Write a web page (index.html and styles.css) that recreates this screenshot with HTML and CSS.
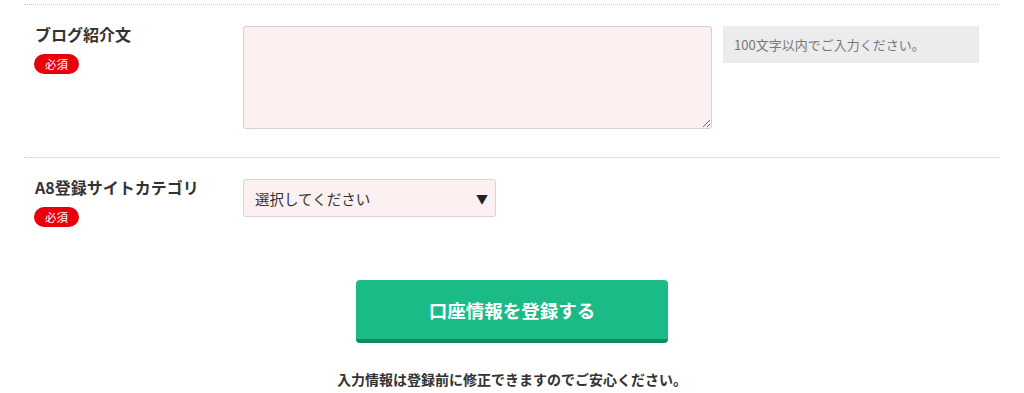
FILE: index.html
```html
<!DOCTYPE html>
<html lang="ja">
<head>
<meta charset="utf-8">
<link rel="stylesheet" href="styles.css">
</head>
<body>
<div class="form">
  <div class="row">
    <div class="label">
      <div class="label-text">ブログ紹介文</div>
      <span class="badge">必須</span>
    </div>
    <div class="field">
      <textarea class="textarea"></textarea>
      <div class="hint">100文字以内でご入力ください。</div>
    </div>
  </div>
  <div class="row row-last">
    <div class="label">
      <div class="label-text">A8登録サイトカテゴリ</div>
      <span class="badge">必須</span>
    </div>
    <div class="field">
      <div class="select">
        <span>選択してください</span>
        <span class="arrow">▼</span>
      </div>
    </div>
  </div>
  <div class="actions">
    <button class="submit">口座情報を登録する</button>
    <p class="note">入力情報は登録前に修正できますのでご安心ください。</p>
  </div>
</div>
</body>
</html>
```

FILE: styles.css
```css
* { box-sizing: border-box; }
html, body { margin: 0; padding: 0; background: #fff; }
body {
  font-family: "Noto Sans CJK JP", "Noto Sans", sans-serif;
  color: #333;
}
.form {
  padding: 4px 24px 0 24px;
  width: 1024px;
}
.row {
  display: flex;
  border-top: 1px dotted #c8c8c8;
  padding: 21px 0 28px 0;
}
.row-last { padding-bottom: 0; height: 70px; }
.label {
  width: 219px;
  padding-left: 11px;
  flex: none;
}
.label-text {
  font-size: 16px;
  font-weight: bold;
  line-height: 16px;
  color: #333;
}
.badge {
  display: inline-block;
  margin-top: 12px;
  margin-left: -1px;
  width: 45px;
  height: 20px;
  line-height: 20px;
  border-radius: 10px;
  background: #e8000b;
  color: #fff;
  font-size: 11.5px;
  text-align: center;
}
.field {
  display: flex;
  gap: 11px;
  align-items: flex-start;
}
.textarea {
  width: 469px;
  height: 103px;
  background: #fdf0f1;
  border: 1px solid #d8cfcf;
  border-radius: 3px;
  margin: 0;
  padding: 6px;
  resize: vertical;
  display: block;
}
.hint {
  width: 256px;
  height: 37px;
  background: #ececec;
  color: #777;
  font-size: 13px;
  line-height: 37px;
  padding-left: 11px;
}
.select {
  width: 253px;
  height: 38px;
  background: #fdf0f1;
  border: 1px solid #dcd4d4;
  border-radius: 3px;
  display: flex;
  align-items: center;
  justify-content: space-between;
  padding: 0 7px 0 11px;
  font-size: 14.5px;
  color: #333;
}
.arrow { font-size: 12px; color: #222; }
.actions {
  display: flex;
  flex-direction: column;
  align-items: center;
  padding-top: 53px;
}
.submit {
  width: 312px;
  height: 63px;
  background: #1bbb87;
  border: none;
  border-bottom: 4px solid #0f8c5e;
  border-radius: 4px;
  color: #fff;
  font-family: "Noto Sans CJK JP", sans-serif;
  font-size: 18.5px;
  font-weight: bold;
  padding: 0;
}
.note {
  margin: 26px 0 0 0;
  font-size: 14px;
  font-weight: bold;
  color: #333;
  line-height: 20px;
}
```
